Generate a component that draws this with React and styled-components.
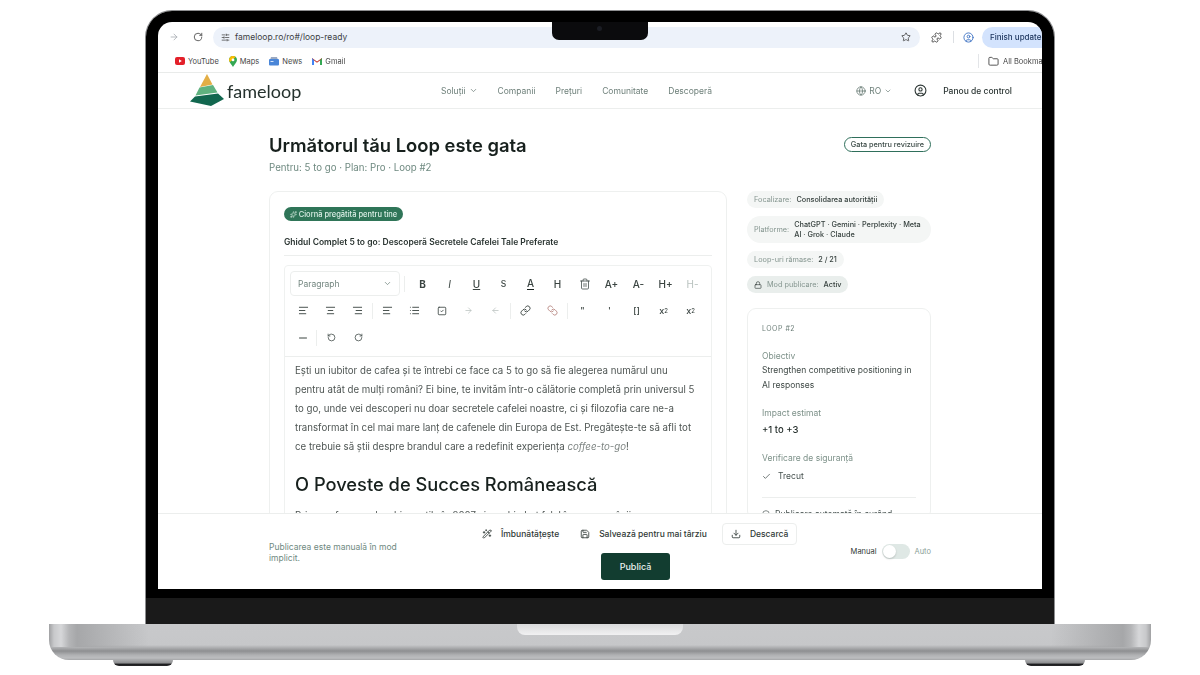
import React from "react";
import styled, { createGlobalStyle } from "styled-components";
import {
  ArrowLeft,
  ArrowRight,
  AlignCenter,
  AlignLeft,
  AlignRight,
  Check,
  ChevronDown,
  Circle,
  CircleUser,
  Download,
  Folder,
  Globe,
  Link,
  List,
  Lock,
  Minus,
  Puzzle,
  RotateCcw,
  RotateCw,
  Save,
  SlidersHorizontal,
  Sparkles,
  SquareCheck,
  Star,
  Trash2,
  WandSparkles,
} from "lucide-react";

const GlobalStyle = createGlobalStyle`
  html, body {
    margin: 0;
    padding: 0;
    background: #fff;
    overflow: hidden;
  }
  * {
    box-sizing: border-box;
  }
  body {
    font-family: Inter, "Liberation Sans", sans-serif;
  }
`;

const Stage = styled.div`
  width: 1200px;
  height: 675px;
  padding-top: 11px;
  display: flex;
  flex-direction: column;
  align-items: center;
`;

const Lid = styled.div`
  position: relative;
  width: 908px;
  height: 613px;
  padding: 11px 12px 35px;
  border-radius: 26px 26px 0 0;
  background: linear-gradient(#000 587px, #1a1a1a 587px);
  box-shadow: 0 0 0 1px #8d8e90;
`;

const Notch = styled.div`
  position: absolute;
  z-index: 2;
  top: 11px;
  left: 406px;
  width: 96px;
  height: 18px;
  border-radius: 0 0 7px 7px;
  background: #0b0b0d;

  &::after {
    content: "";
    position: absolute;
    top: 4px;
    left: 45px;
    width: 5px;
    height: 5px;
    border-radius: 50%;
    background: #1b1d24;
  }
`;

const Screen = styled.div`
  width: 884px;
  height: 567px;
  background: #fff;
  border-radius: 14px 14px 0 0;
  overflow: hidden;
  display: flex;
  flex-direction: column;
  filter: blur(0.3px);
`;

const BrowserBar = styled.div`
  height: 28px;
  flex: none;
  display: flex;
  align-items: center;
  padding-top: 2px;
  color: #474747;
`;

const BarIcon = styled.span`
  width: ${(p) => p.$w || 24}px;
  flex: none;
  display: flex;
  justify-content: center;
  color: ${(p) => p.$color || "#474747"};
`;

const Address = styled.div`
  width: 707px;
  height: 21px;
  margin-left: 8px;
  padding: 0 9px 0 4px;
  flex: none;
  display: flex;
  align-items: center;
  border-radius: 11px;
  background: #edf2fa;
`;

const Url = styled.span`
  flex: 1;
  margin-left: 2px;
  font-size: 8.5px;
  color: #3c4043;
`;

const BarDivider = styled.span`
  width: 1px;
  height: 12px;
  background: #dcdfe3;
  flex: none;
`;

const UpdatePill = styled.div`
  width: 60px;
  height: 21px;
  padding-left: 8px;
  flex: none;
  display: flex;
  align-items: center;
  border-radius: 11px 0 0 11px;
  background: #d3e3fd;
  font-size: 8px;
  font-weight: 500;
  color: #1f3760;
  white-space: nowrap;
  overflow: hidden;
`;

const Bookmarks = styled.div`
  height: 23px;
  flex: none;
  padding: 0 0 0 17px;
  display: flex;
  align-items: center;
  border-bottom: 1px solid #e9ebea;
  font-size: 7.5px;
  color: #474747;
`;

const Bookmark = styled.span`
  display: flex;
  align-items: center;
  gap: 3px;
  margin-right: 10px;
`;

const AllBookmarks = styled.span`
  margin-left: auto;
  width: 64px;
  height: 14px;
  display: flex;
  align-items: center;
  gap: 4px;
  padding-left: 9px;
  border-left: 1px solid #e3e5e8;
  white-space: nowrap;
  overflow: hidden;
`;

const SiteNav = styled.nav`
  height: 36px;
  flex: none;
  padding: 0 30px 0 32px;
  display: flex;
  align-items: center;
  border-bottom: 1px solid #eceeed;
`;

const Brand = styled.div`
  width: 110px;
  flex: none;
  display: flex;
  align-items: center;
  gap: 3px;
`;

const LogoMark = styled.svg`
  flex: none;
  margin-top: -2px;
`;

const BrandName = styled.span`
  font-family: Lato, sans-serif;
  font-size: 18px;
  font-weight: 400;
  color: #24312d;
`;

const NavLinks = styled.div`
  margin-left: 141px;
  display: flex;
  align-items: center;
  gap: 20px;
`;

const NavLink = styled.span`
  display: flex;
  align-items: center;
  gap: 3px;
  font-size: 8.5px;
  color: #6d7f79;
`;

const NavRight = styled.div`
  margin-left: auto;
  display: flex;
  align-items: center;
`;

const Lang = styled(NavLink)`
  margin-right: 22px;
`;

const Dashboard = styled.span`
  margin-left: 16px;
  font-size: 8.5px;
  font-weight: 500;
  color: #2b3533;
`;

const Main = styled.main`
  flex: 1;
  min-height: 0;
  overflow: hidden;
`;

const Column = styled.div`
  width: 662px;
  margin: 0 auto;
  padding-top: 24px;
`;

const TitleRow = styled.div`
  display: flex;
  justify-content: space-between;
  align-items: flex-start;
`;

const Title = styled.h1`
  margin: 0;
  font-size: 18.4px;
  line-height: 24px;
  font-weight: 600;
  color: #17201d;
`;

const Subtitle = styled.p`
  margin: 4px 0 16px;
  font-size: 9.7px;
  line-height: 14px;
  color: #6f8a81;
`;

const ReviewBadge = styled.span`
  margin-top: 4px;
  height: 15px;
  padding: 0 6px;
  display: flex;
  align-items: center;
  border: 1px solid #2f6f5b;
  border-radius: 8px;
  font-size: 7.3px;
  font-weight: 500;
  color: #3b4a46;
`;

const Layout = styled.div`
  display: grid;
  grid-template-columns: 458px 184px;
  column-gap: 20px;
  align-items: start;
`;

const Card = styled.section`
  padding: 15px 14px;
  border: 1px solid #eef0ef;
  border-radius: 9px;
`;

const DraftPill = styled.span`
  width: 119px;
  height: 14px;
  display: flex;
  align-items: center;
  justify-content: center;
  gap: 2px;
  border-radius: 7px;
  background: #2f7558;
  font-size: 7.5px;
  font-weight: 500;
  color: #dcefe6;
  white-space: nowrap;
`;

const DraftTitle = styled.div`
  margin-top: 14px;
  padding-bottom: 6px;
  border-bottom: 1px solid #eceeed;
  font-size: 8.5px;
  line-height: 14px;
  font-weight: 600;
  color: #2a3431;
`;

const Editor = styled.div`
  margin-top: 9px;
  border: 1px solid #eff1f0;
  border-radius: 4px 4px 0 0;
`;

const Toolbar = styled.div`
  padding: 4px 5px 5px;
  border-bottom: 1px solid #eceeed;
`;

const ToolRow = styled.div`
  height: 27px;
  display: flex;
  align-items: center;
`;

const ParagraphSelect = styled.div`
  width: 111px;
  height: 25px;
  padding: 0 7px;
  display: flex;
  align-items: center;
  justify-content: space-between;
  border: 1px solid #eceeed;
  border-radius: 4px;
  font-size: 8.5px;
  color: #72857f;
`;

const ToolSep = styled.span`
  width: ${(p) => p.$w || 3}px;
  height: 16px;
  flex: none;
  background: linear-gradient(#eceeed, #eceeed) center / 1px 100% no-repeat;
`;

const Tool = styled.span`
  width: ${(p) => p.$w || 27}px;
  height: 27px;
  flex: none;
  display: flex;
  align-items: center;
  justify-content: center;
  font-size: ${(p) => p.$size || 10}px;
  font-weight: ${(p) => p.$weight || 500};
  font-style: ${(p) => (p.$italic ? "italic" : "normal")};
  text-decoration: ${(p) => (p.$underline ? "underline" : "none")};
  color: ${(p) => p.$color || "#3a4441"};
  transform: ${(p) => (p.$flip ? "scaleX(-1)" : "none")};
`;

const ColorA = styled.span`
  display: block;
  line-height: 10px;
  padding-bottom: 1px;
  border-bottom: 1.5px solid #1c2422;
`;

const Sup = styled.sup`
  font-size: 6px;
  line-height: 0;
`;

const Sub = styled.sub`
  font-size: 6px;
  line-height: 0;
`;

const EditorBody = styled.div`
  padding: 4px 10px 0;
`;

const Para = styled.p`
  max-width: 402px;
  margin: 0;
  font-size: 9.7px;
  line-height: 19px;
  color: #4f5654;
`;

const SoftEm = styled.em`
  color: #7d8482;
`;

const SecondPara = styled(Para)`
  margin-top: 10px;
`;

const Heading = styled.h2`
  margin: 16px 0 0;
  font-size: 18.3px;
  line-height: 24px;
  font-weight: 500;
  color: #17201d;
`;

const Side = styled.aside`
  display: flex;
  flex-direction: column;
  align-items: flex-start;
`;

const Chip = styled.div`
  min-height: 17px;
  margin-bottom: 8px;
  padding: 0 7px;
  display: flex;
  align-items: center;
  gap: 5px;
  border-radius: 14px;
  background: ${(p) => (p.$strong ? "#e9eeec" : "#f4f6f5")};
  font-size: 7.3px;
  line-height: 10px;
  color: #84958f;
`;

const WideChip = styled(Chip)`
  width: 184px;
  min-height: 27px;
  padding: 3px 6px 3px 7px;
`;

const ChipValue = styled.span`
  font-weight: 500;
  color: #36413e;
`;

const Panel = styled.div`
  width: 184px;
  margin-top: 7px;
  padding: 15px 14px 0;
  border: 1px solid #eef0ef;
  border-radius: 9px;
`;

const PanelKicker = styled.div`
  font-size: 7px;
  line-height: 10px;
  letter-spacing: 0.5px;
  color: #6d7f79;
`;

const FieldLabel = styled.div`
  margin-top: ${(p) => p.$top || 16}px;
  font-size: 8.5px;
  line-height: 12px;
  color: #7d9189;
`;

const FieldText = styled.div`
  margin-top: 1px;
  font-size: 8.5px;
  line-height: 15px;
  color: #404a47;
`;

const FieldStrong = styled.div`
  margin-top: 5px;
  font-size: 9.5px;
  line-height: 12px;
  font-weight: 500;
  color: #1f2926;
`;

const PassRow = styled.div`
  margin-top: 6px;
  display: flex;
  align-items: center;
  gap: 7px;
  font-size: 8.5px;
  line-height: 12px;
  color: #475250;
`;

const PanelFoot = styled.div`
  margin-top: 15px;
  padding-top: 11px;
  border-top: 1px solid #eceeed;
  display: flex;
  align-items: center;
  gap: 5px;
  font-size: 8.5px;
  color: #475250;
`;

const Footer = styled.footer`
  height: 76px;
  flex: none;
  display: grid;
  grid-template-columns: 209px 319px 134px;
  justify-content: center;
  align-items: center;
  background: #fff;
  border-top: 1px solid #eceeed;
`;

const FootNote = styled.p`
  width: 135px;
  margin: 2px 0 0;
  font-size: 8.5px;
  line-height: 11px;
  color: #6f8a81;
`;

const FootCenter = styled.div`
  display: flex;
  flex-direction: column;
  align-items: center;
  gap: 8px;
`;

const Actions = styled.div`
  width: 319px;
  display: flex;
  align-items: center;
  padding-left: 4px;
`;

const Action = styled.span`
  height: 22px;
  flex: none;
  margin-left: ${(p) => p.$ml || 0}px;
  display: flex;
  align-items: center;
  gap: 9px;
  padding: ${(p) => (p.$boxed ? "0 8px" : "0")};
  border: ${(p) => (p.$boxed ? "1px solid #eceeed" : "none")};
  border-radius: 4px;
  font-size: 8.5px;
  font-weight: 500;
  color: #2f3936;
  white-space: nowrap;
`;

const Publish = styled.button`
  width: 69px;
  height: 27px;
  margin-right: 4px;
  padding: 0;
  border: none;
  border-radius: 3px;
  background: #123d30;
  font-family: inherit;
  font-size: 9px;
  font-weight: 500;
  color: #e9f1ee;
`;

const ModeSwitch = styled.div`
  display: flex;
  align-items: center;
  justify-content: flex-end;
  gap: 5px;
  font-size: 7.5px;
`;

const ModeLabel = styled.span`
  color: ${(p) => (p.$active ? "#2f3936" : "#8aa097")};
`;

const Track = styled.span`
  width: 28px;
  height: 15px;
  padding: 1px;
  display: block;
  border-radius: 8px;
  background: #dfe8e5;
`;

const Knob = styled.span`
  width: 13px;
  height: 13px;
  display: block;
  border-radius: 50%;
  background: #fff;
  box-shadow: 0 1px 2px rgba(0, 0, 0, 0.18);
`;

const Base = styled.div`
  position: relative;
  width: 1102px;
  height: 36px;
  flex: none;
  border-radius: 0 0 20px 20px;
  background:
    linear-gradient(90deg, #a0a1a3 0, #c8c9cb 5px, #d6d7d9 12px, #b4b5b7 20px, #a6a7a9 28px, rgba(198, 199, 201, 0) 100px) left top / 110px 23px no-repeat,
    linear-gradient(270deg, #a0a1a3 0, #c8c9cb 5px, #d6d7d9 12px, #b4b5b7 20px, #a6a7a9 28px, rgba(198, 199, 201, 0) 100px) right top / 110px 23px no-repeat,
    linear-gradient(#c8c9cb 0, #c6c7c9 21px, #8e8f91 27px, #b0b1b3 31px, #bcbdbf 34px, #a4a5a7 36px);
`;

const ThumbCut = styled.div`
  position: absolute;
  top: 0;
  left: 468px;
  width: 166px;
  height: 11px;
  border-radius: 0 0 8px 8px;
  background: linear-gradient(#d9dadb, #f1f1f2);
`;

const Feet = styled.div`
  width: 1102px;
  padding: 0 66px 0 64px;
  display: flex;
  justify-content: space-between;
`;

const Foot = styled.span`
  width: 60px;
  height: 6px;
  display: block;
  border-radius: 0 0 10px 10px;
  background: linear-gradient(#a9aaac 0, #8d8e90 50%, #1c1c1e 70%, #2a2a2c 100%);
`;

const Logo = () => (
  <LogoMark width="34" height="32" viewBox="0 0 34 32">
    <path d="M17 0 L22.5 10.5 L10 13 Z" fill="#e3ae45" />
    <path d="M9.5 13.5 L23 11 L27.5 18.5 L5.5 21.5 Z" fill="#5fb27f" />
    <path d="M5 22.5 L28 19.5 L34 25 L21 32 L0 27.5 Z" fill="#12674f" />
  </LogoMark>
);

const YouTubeIcon = () => (
  <svg width="10" height="8" viewBox="0 0 10 8">
    <rect width="10" height="8" rx="2" fill="#e3202a" />
    <path d="M4 2.3 L6.8 4 L4 5.7 Z" fill="#fff" />
  </svg>
);

const MapsIcon = () => (
  <svg width="8" height="11" viewBox="0 0 8 11">
    <path d="M4 0 C6.3 0 8 1.7 8 3.9 C8 6.4 5.2 8.2 4 11 C2.8 8.2 0 6.4 0 3.9 C0 1.7 1.7 0 4 0 Z" fill="#34a853" />
    <path d="M1 1.4 C1.7 .5 2.8 0 4 0 C5 0 6 .4 6.7 1.1 L1 6 C.3 5.2 0 4.6 0 3.9 C0 3 .4 2.1 1 1.4 Z" fill="#fbbc04" />
    <circle cx="4" cy="3.9" r="1.4" fill="#fff" />
  </svg>
);

const NewsIcon = () => (
  <svg width="10" height="10" viewBox="0 0 10 10">
    <path d="M2 1 H8 L9 4 H1 Z" fill="#9aa9c2" />
    <rect y="3" width="10" height="6.5" rx="1" fill="#4a86d8" />
    <rect x="1.5" y="5" width="3" height="1" fill="#d7e5fa" />
  </svg>
);

const GmailIcon = () => (
  <svg width="10" height="8" viewBox="0 0 10 8">
    <path d="M0 1 L5 4.6 L10 1 V8 H8 V3.6 L5 5.8 L2 3.6 V8 H0 Z" fill="#c5372c" />
    <path d="M8 3.6 L10 1 V8 H8 Z" fill="#34a853" />
    <path d="M0 1 L2 3.6 V8 H0 Z" fill="#4285f4" />
  </svg>
);

const App = () => (
  <>
    <GlobalStyle />
    <Stage>
      <Lid>
        <Notch />
        <Screen>
          <BrowserBar>
            <BarIcon $w={32} $color="#a8adb3"><ArrowRight size={10} /></BarIcon>
            <BarIcon $w={15}><RotateCw size={10} /></BarIcon>
            <Address>
              <BarIcon $w={16}><SlidersHorizontal size={9} /></BarIcon>
              <Url>fameloop.ro/ro#/loop-ready</Url>
              <Star size={10} />
            </Address>
            <BarIcon $w={33}><Puzzle size={11} /></BarIcon>
            <BarDivider />
            <BarIcon $w={28} $color="#3f74c4"><CircleUser size={11} /></BarIcon>
            <UpdatePill>Finish update</UpdatePill>
          </BrowserBar>
          <Bookmarks>
            <Bookmark><YouTubeIcon />YouTube</Bookmark>
            <Bookmark><MapsIcon />Maps</Bookmark>
            <Bookmark><NewsIcon />News</Bookmark>
            <Bookmark><GmailIcon />Gmail</Bookmark>
            <AllBookmarks>
              <BarIcon $w={11}><Folder size={11} /></BarIcon>
              All Bookmarks
            </AllBookmarks>
          </Bookmarks>
          <SiteNav>
            <Brand>
              <Logo />
              <BrandName>fameloop</BrandName>
            </Brand>
            <NavLinks>
              <NavLink>Soluții <ChevronDown size={9} /></NavLink>
              <NavLink>Companii</NavLink>
              <NavLink>Prețuri</NavLink>
              <NavLink>Comunitate</NavLink>
              <NavLink>Descoperă</NavLink>
            </NavLinks>
            <NavRight>
              <Lang><Globe size={10} /> RO <ChevronDown size={8} /></Lang>
              <CircleUser size={13} color="#2b3533" />
              <Dashboard>Panou de control</Dashboard>
            </NavRight>
          </SiteNav>
          <Main>
            <Column>
              <TitleRow>
                <Title>Următorul tău Loop este gata</Title>
                <ReviewBadge>Gata pentru revizuire</ReviewBadge>
              </TitleRow>
              <Subtitle>Pentru: 5 to go · Plan: Pro · Loop #2</Subtitle>
              <Layout>
                <Card>
                  <DraftPill><Sparkles size={7} /> Ciornă pregătită pentru tine</DraftPill>
                  <DraftTitle>Ghidul Complet 5 to go: Descoperă Secretele Cafelei Tale Preferate</DraftTitle>
                  <Editor>
                    <Toolbar>
                      <ToolRow>
                        <ParagraphSelect>Paragraph <ChevronDown size={9} /></ParagraphSelect>
                        <ToolSep $w={9} />
                        <Tool $weight={700}>B</Tool>
                        <Tool $italic $weight={400}>I</Tool>
                        <Tool $underline>U</Tool>
                        <Tool $size={8.5}>S</Tool>
                        <Tool><ColorA>A</ColorA></Tool>
                        <Tool>H</Tool>
                        <Tool><Trash2 size={12} strokeWidth={1.5} /></Tool>
                        <Tool>A+</Tool>
                        <Tool>A-</Tool>
                        <Tool>H+</Tool>
                        <Tool $color="#b9c2bf" $weight={400}>H-</Tool>
                      </ToolRow>
                      <ToolRow>
                        <Tool><AlignLeft size={11} /></Tool>
                        <Tool><AlignCenter size={11} /></Tool>
                        <Tool><AlignRight size={11} /></Tool>
                        <ToolSep />
                        <Tool><AlignLeft size={11} /></Tool>
                        <Tool><List size={11} /></Tool>
                        <Tool><SquareCheck size={10} /></Tool>
                        <Tool $color="#b9c2bf"><ArrowRight size={9} /></Tool>
                        <Tool $color="#b9c2bf"><ArrowLeft size={9} /></Tool>
                        <ToolSep />
                        <Tool><Link size={11} /></Tool>
                        <Tool $flip $color="#b98a84"><Link size={11} /></Tool>
                        <ToolSep />
                        <Tool $size={9}>"</Tool>
                        <Tool $size={9}>'</Tool>
                        <Tool $size={9}>[]</Tool>
                        <Tool $size={9}>x<Sup>2</Sup></Tool>
                        <Tool $size={9}>x<Sub>2</Sub></Tool>
                      </ToolRow>
                      <ToolRow>
                        <Tool $w={25}><Minus size={12} /></Tool>
                        <ToolSep />
                        <Tool><RotateCcw size={9} /></Tool>
                        <Tool><RotateCw size={9} /></Tool>
                      </ToolRow>
                    </Toolbar>
                    <EditorBody>
                      <Para>
                        Ești un iubitor de cafea și te întrebi ce face ca 5 to go să fie alegerea numărul unu
                        pentru atât de mulți români? Ei bine, te invităm într-o călătorie completă prin universul 5
                        to go, unde vei descoperi nu doar secretele cafelei noastre, ci și filozofia care ne-a
                        transformat în cel mai mare lanț de cafenele din Europa de Est. Pregătește-te să afli tot
                        ce trebuie să știi despre brandul care a redefinit experiența <SoftEm>coffee-to-go</SoftEm>!
                      </Para>
                      <Heading>O Poveste de Succes Românească</Heading>
                      <SecondPara>Prima cafenea a deschis porțile în 2007 și a schimbat felul în care românii</SecondPara>
                    </EditorBody>
                  </Editor>
                </Card>
                <Side>
                  <Chip>Focalizare: <ChipValue>Consolidarea autorității</ChipValue></Chip>
                  <WideChip>
                    Platforme: <ChipValue>ChatGPT · Gemini · Perplexity · Meta AI · Grok · Claude</ChipValue>
                  </WideChip>
                  <Chip>Loop-uri rămase: <ChipValue>2 / 21</ChipValue></Chip>
                  <Chip $strong><Lock size={8} color="#36413e" /> Mod publicare: <ChipValue>Activ</ChipValue></Chip>
                  <Panel>
                    <PanelKicker>LOOP #2</PanelKicker>
                    <FieldLabel>Obiectiv</FieldLabel>
                    <FieldText>Strengthen competitive positioning in AI responses</FieldText>
                    <FieldLabel $top={14}>Impact estimat</FieldLabel>
                    <FieldStrong>+1 to +3</FieldStrong>
                    <FieldLabel>Verificare de siguranță</FieldLabel>
                    <PassRow><Check size={9} /> Trecut</PassRow>
                    <PanelFoot><Circle size={8} /> Publicare automată în curând</PanelFoot>
                  </Panel>
                </Side>
              </Layout>
            </Column>
          </Main>
          <Footer>
            <FootNote>Publicarea este manuală în mod implicit.</FootNote>
            <FootCenter>
              <Actions>
                <Action><WandSparkles size={10} /> Îmbunătățește</Action>
                <Action $ml={21}><Save size={10} /> Salvează pentru mai târziu</Action>
                <Action $ml={15} $boxed><Download size={10} /> Descarcă</Action>
              </Actions>
              <Publish>Publică</Publish>
            </FootCenter>
            <ModeSwitch>
              <ModeLabel $active>Manual</ModeLabel>
              <Track><Knob /></Track>
              <ModeLabel>Auto</ModeLabel>
            </ModeSwitch>
          </Footer>
        </Screen>
      </Lid>
      <Base><ThumbCut /></Base>
      <Feet><Foot /><Foot /></Feet>
    </Stage>
  </>
);

export default App;
